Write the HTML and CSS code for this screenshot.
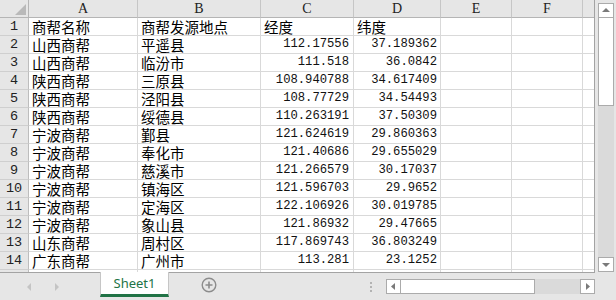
FILE: index.html
```html
<!DOCTYPE html>
<html>
<head>
<meta charset="utf-8">
<link rel="stylesheet" href="styles.css">
</head>
<body>
<div class="app">
  <div class="main">
    <div class="grid">
      <div class="row head">
        <div class="c rh corner"><span class="tri"></span></div>
        <div class="c ca">A</div><div class="c cb">B</div><div class="c cc">C</div><div class="c cd">D</div><div class="c ce">E</div><div class="c cf">F</div><div class="c cg"></div>
      </div>
      <div class="row"><div class="c rh">1</div><div class="c ca t">商帮名称</div><div class="c cb t">商帮发源地点</div><div class="c cc t">经度</div><div class="c cd t">纬度</div><div class="c ce"></div><div class="c cf"></div><div class="c cg"></div></div>
      <div class="row"><div class="c rh">2</div><div class="c ca t">山西商帮</div><div class="c cb t">平遥县</div><div class="c cc n">112.17556</div><div class="c cd n">37.189362</div><div class="c ce"></div><div class="c cf"></div><div class="c cg"></div></div>
      <div class="row"><div class="c rh">3</div><div class="c ca t">山西商帮</div><div class="c cb t">临汾市</div><div class="c cc n">111.518</div><div class="c cd n">36.0842</div><div class="c ce"></div><div class="c cf"></div><div class="c cg"></div></div>
      <div class="row"><div class="c rh">4</div><div class="c ca t">陕西商帮</div><div class="c cb t">三原县</div><div class="c cc n">108.940788</div><div class="c cd n">34.617409</div><div class="c ce"></div><div class="c cf"></div><div class="c cg"></div></div>
      <div class="row"><div class="c rh">5</div><div class="c ca t">陕西商帮</div><div class="c cb t">泾阳县</div><div class="c cc n">108.77729</div><div class="c cd n">34.54493</div><div class="c ce"></div><div class="c cf"></div><div class="c cg"></div></div>
      <div class="row"><div class="c rh">6</div><div class="c ca t">陕西商帮</div><div class="c cb t">绥德县</div><div class="c cc n">110.263191</div><div class="c cd n">37.50309</div><div class="c ce"></div><div class="c cf"></div><div class="c cg"></div></div>
      <div class="row"><div class="c rh">7</div><div class="c ca t">宁波商帮</div><div class="c cb t">鄞县</div><div class="c cc n">121.624619</div><div class="c cd n">29.860363</div><div class="c ce"></div><div class="c cf"></div><div class="c cg"></div></div>
      <div class="row"><div class="c rh">8</div><div class="c ca t">宁波商帮</div><div class="c cb t">奉化市</div><div class="c cc n">121.40686</div><div class="c cd n">29.655029</div><div class="c ce"></div><div class="c cf"></div><div class="c cg"></div></div>
      <div class="row"><div class="c rh">9</div><div class="c ca t">宁波商帮</div><div class="c cb t">慈溪市</div><div class="c cc n">121.266579</div><div class="c cd n">30.17037</div><div class="c ce"></div><div class="c cf"></div><div class="c cg"></div></div>
      <div class="row"><div class="c rh">10</div><div class="c ca t">宁波商帮</div><div class="c cb t">镇海区</div><div class="c cc n">121.596703</div><div class="c cd n">29.9652</div><div class="c ce"></div><div class="c cf"></div><div class="c cg"></div></div>
      <div class="row"><div class="c rh">11</div><div class="c ca t">宁波商帮</div><div class="c cb t">定海区</div><div class="c cc n">122.106926</div><div class="c cd n">30.019785</div><div class="c ce"></div><div class="c cf"></div><div class="c cg"></div></div>
      <div class="row"><div class="c rh">12</div><div class="c ca t">宁波商帮</div><div class="c cb t">象山县</div><div class="c cc n">121.86932</div><div class="c cd n">29.47665</div><div class="c ce"></div><div class="c cf"></div><div class="c cg"></div></div>
      <div class="row"><div class="c rh">13</div><div class="c ca t">山东商帮</div><div class="c cb t">周村区</div><div class="c cc n">117.869743</div><div class="c cd n">36.803249</div><div class="c ce"></div><div class="c cf"></div><div class="c cg"></div></div>
      <div class="row"><div class="c rh">14</div><div class="c ca t">广东商帮</div><div class="c cb t">广州市</div><div class="c cc n">113.281</div><div class="c cd n">23.1252</div><div class="c ce"></div><div class="c cf"></div><div class="c cg"></div></div>
      <div class="row"><div class="c rh"></div><div class="c ca t"></div><div class="c cb t"></div><div class="c cc n"></div><div class="c cd n"></div><div class="c ce"></div><div class="c cf"></div><div class="c cg"></div></div>
    </div>
    <div class="vscroll">
      <div class="sbtn up"><svg width="14" height="13" viewBox="0 0 14 13"><path d="M3 8 L7 4 L11 8 Z" fill="#7a7a7a"/></svg></div>
      <div class="vthumb"></div>
      <div class="vtrack"></div>
      <div class="sbtn down"><svg width="14" height="13" viewBox="0 0 14 13"><path d="M3 5 L7 9 L11 5 Z" fill="#7a7a7a"/></svg></div>
    </div>
  </div>
  <div class="bottom">
    <div class="nav">
      <svg width="8" height="10" viewBox="0 0 8 10"><path d="M6 1 L2 5 L6 9 Z" fill="#c4c4c4"/></svg>
      <svg width="8" height="10" viewBox="0 0 8 10"><path d="M2 1 L6 5 L2 9 Z" fill="#c4c4c4"/></svg>
    </div>
    <div class="tab">Sheet1</div>
    <div class="add"><svg width="16" height="16" viewBox="0 0 16 16"><circle cx="8" cy="8" r="6.8" fill="none" stroke="#8c8c8c" stroke-width="1.4"/><path d="M8 4.5 V11.5 M4.5 8 H11.5" stroke="#8c8c8c" stroke-width="1.6"/></svg></div>
    <div class="spacer"></div>
    <div class="dots"><i></i><i></i><i></i></div>
    <div class="hscroll">
      <div class="hbtn"><svg width="13" height="13" viewBox="0 0 13 13"><path d="M8 3 L4 6.5 L8 10 Z" fill="#7a7a7a"/></svg></div>
      <div class="hthumb"></div>
      <div class="htrack"></div>
      <div class="hbtn"><svg width="13" height="13" viewBox="0 0 13 13"><path d="M5 3 L9 6.5 L5 10 Z" fill="#7a7a7a"/></svg></div>
    </div>
  </div>
</div>
</body>
</html>
```

FILE: styles.css
```css
* { box-sizing: border-box; }
html, body { margin: 0; padding: 0; }
body { width: 616px; height: 300px; overflow: hidden; background: #e6e6e6; }
.app { width: 616px; height: 300px; display: flex; flex-direction: column; }
.main { display: flex; height: 273px; }
.grid {
  width: 595px; height: 273px; overflow: hidden; background: #fff;
  border-right: 1px solid #a3a3a3; border-bottom: 1px solid #a3a3a3;
}
.row { display: flex; height: 18px; }
.c {
  flex: none; height: 18px; border-right: 1px solid #d9d9d9; border-bottom: 1px solid #d9d9d9;
  font-family: "Noto Sans CJK SC", sans-serif; font-size: 14.5px; line-height: 17px;
  color: #000; white-space: nowrap; position: relative;
}
.rh { width: 29px; background: #e6e6e6; border-right-color: #bdbdbd; border-bottom-color: #cfcfcf;
  text-align: center; font-family: "Liberation Mono", monospace; font-size: 13.5px; line-height: 17px; color: #222; }
.head .c { background: #e6e6e6; border-right-color: #c6c6c6; border-bottom-color: #b5b5b5;
  text-align: center; font-family: "Liberation Serif", serif; font-size: 14px; color: #222; }
.head .rh { border-right-color: #b5b5b5; }
.ca { width: 109px; }
.cb { width: 123px; }
.cc { width: 93px; }
.cd { width: 87px; }
.ce { width: 71px; }
.cf { width: 71px; }
.cg { width: 11px; border-right: none; }
.t { padding-left: 3px; }
.n { text-align: right; padding-right: 4px; font-family: "Liberation Mono", monospace; font-size: 12.2px; line-height: 17px; color: #111; }
.cd.n { padding-right: 3px; }
.corner .tri {
  position: absolute; right: 2px; bottom: 2px; width: 0; height: 0;
  border-left: 11px solid transparent; border-bottom: 11px solid #b9b9b9;
}
.vscroll { width: 21px; height: 273px; display: flex; flex-direction: column; padding: 3px 3px 0 3px; }
.sbtn { width: 16px; height: 15px; background: #fff; border: 1px solid #ababab; display: flex; align-items: center; justify-content: center; }
.vthumb { width: 16px; height: 88px; background: #fff; border: 1px solid #ababab; border-top: none; }
.vtrack { flex: 1; width: 16px; background: #dadada; }
.down { margin-bottom: 1px; }
.bottom { height: 27px; display: flex; align-items: flex-start; }
.nav { width: 100px; height: 27px; display: flex; align-items: center; gap: 20px; padding-left: 25px; padding-top: 0; }
.tab {
  width: 69px; height: 25px; margin-top: -1px; background: #fff;
  border-left: 1px solid #c6c6c6; border-right: 1px solid #c6c6c6; border-bottom: 3px solid #217346;
  font-family: "Noto Sans", sans-serif; font-size: 13px; color: #217346; text-align: center; line-height: 23px;
}
.add { width: 80px; height: 27px; display: flex; align-items: center; padding-left: 32px; padding-bottom: 3px; }
.spacer { flex: 1; }
.dots { width: 16px; height: 27px; display: flex; flex-direction: column; gap: 2px; padding-top: 9px; padding-left: 0; }
.dots i { display: block; width: 2px; height: 2px; background: #b3b3b3; }
.hscroll { width: 230px; height: 27px; display: flex; padding: 6px 21px 0 0; }
.hbtn { width: 15px; height: 15px; background: #fff; border: 1px solid #ababab; display: flex; align-items: center; justify-content: center; }
.hthumb { width: 134px; height: 15px; background: #fff; border: 1px solid #ababab; border-left: none; }
.htrack { flex: 1; height: 15px; background: #dadada; }
```
